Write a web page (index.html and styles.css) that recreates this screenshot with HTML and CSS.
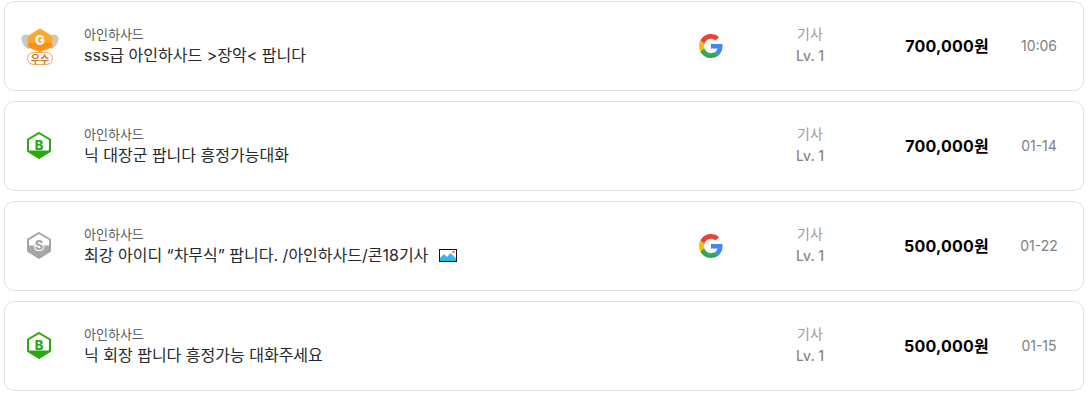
FILE: index.html
```html
<!DOCTYPE html>
<html lang="ko">
<head>
<meta charset="utf-8">
<title>거래 목록</title>
<link rel="stylesheet" href="styles.css">
</head>
<body>
<svg class="defs" width="0" height="0" aria-hidden="true">
  <defs>
    <symbol id="google" viewBox="0 0 48 48">
      <path fill="#EA4335" d="M24 9.500c3.540 0 6.710 1.220 9.210 3.600l6.850-6.850C35.900 2.380 30.470 0 24 0 14.620 0 6.510 5.380 2.560 13.220l7.980 6.190C12.430 13.720 17.740 9.500 24 9.500z"/>
      <path fill="#4285F4" d="M46.980 24.550c0-1.570-.15-3.090-.38-4.550H24v9.020h12.940c-.58 2.960-2.260 5.480-4.780 7.180l7.730 6c4.510-4.180 7.090-10.360 7.090-17.650z"/>
      <path fill="#FBBC05" d="M10.530 28.590c-.48-1.450-.76-2.990-.76-4.590s.27-3.140.76-4.590l-7.980-6.190C.92 16.460 0 20.120 0 24c0 3.880.92 7.540 2.560 10.780l7.970-6.190z"/>
      <path fill="#34A853" d="M24 48c6.480 0 11.930-2.130 15.890-5.810l-7.730-6c-2.150 1.450-4.920 2.300-8.160 2.300-6.260 0-11.570-4.220-13.470-9.910l-7.980 6.190C6.510 42.620 14.620 48 24 48z"/>
    </symbol>
  </defs>
</svg>
<main class="list">
  <article class="card">
    <div class="badge">
      <svg width="40" height="37" viewBox="-2 0 40 37">
        <path fill="#c8c8c8" d="M7 7C3 6 0 8 .5 11 1 15 3 19 8 21zM31 7c4-1 7 1 6.500 4-.5 4-2.500 8-7.500 10z"/>
        <path fill="#fba62f" stroke="#fbb75a" d="M19 .7 31.500 8.500V19L19 24 6.500 19V8.500z"/>
        <path fill="#f59320" d="M7 15H31V19L19 23.500 7 19z"/>
        <text x="19" y="17" class="badge-g">G</text>
        <rect x="6.500" y="24.500" width="25" height="12" rx="6" fill="#fff" stroke="#e5a868"/>
        <text x="19" y="34.500" class="badge-word">우수</text>
      </svg>
    </div>
    <div class="info">
      <div class="server">아인하사드</div>
      <div class="title">sss급 아인하사드 &gt;장악&lt; 팝니다</div>
    </div>
    <div class="login"><svg width="24" height="24"><use href="#google"/></svg></div>
    <div class="level"><span class="job">기사</span><span class="lv">Lv. 1</span></div>
    <div class="price">700,000원</div>
    <div class="date">10:06</div>
  </article>

  <article class="card">
    <div class="badge">
      <svg width="26" height="30" viewBox="0 0 26 30">
        <path fill="#fff" stroke="#2ba80f" stroke-width="2" d="M13 2 24 8.500V20L13 26.500 2 20V8.500z"/>
        <path fill="#2ba80f" d="M2 19.500H24V21L13 28 2 21z"/>
        <text x="13" y="18.500" class="badge-letter green">B</text>
      </svg>
    </div>
    <div class="info">
      <div class="server">아인하사드</div>
      <div class="title">닉 대장군 팝니다 흥정가능대화</div>
    </div>
    <div class="login"></div>
    <div class="level"><span class="job">기사</span><span class="lv">Lv. 1</span></div>
    <div class="price">700,000원</div>
    <div class="date">01-14</div>
  </article>

  <article class="card">
    <div class="badge">
      <svg width="26" height="30" viewBox="0 0 26 30">
        <path fill="#fff" stroke="#a6a6a6" stroke-width="2" d="M13 2 24 8.500V20L13 26.500 2 20V8.500z"/>
        <path fill="#a6a6a6" d="M2 14.500H24V21L13 28 2 21z"/>
        <text x="13" y="19" class="badge-letter grey">S</text>
      </svg>
    </div>
    <div class="info">
      <div class="server">아인하사드</div>
      <div class="title">최강 아이디 “차무식” 팝니다. /아인하사드/콘18기사
        <svg class="pic" width="18" height="13" viewBox="0 0 18 13">
          <rect x=".5" y=".5" width="17" height="12" fill="#fff" stroke="#111"/>
          <path fill="#2fb9f0" d="M1 12V9L5 5 8 8 11.500 4 17 9.500V12z"/>
          <circle cx="14.500" cy="3" r="1.300" fill="#f26d3d"/>
        </svg>
      </div>
    </div>
    <div class="login"><svg width="24" height="24"><use href="#google"/></svg></div>
    <div class="level"><span class="job">기사</span><span class="lv">Lv. 1</span></div>
    <div class="price">500,000원</div>
    <div class="date">01-22</div>
  </article>

  <article class="card">
    <div class="badge">
      <svg width="26" height="30" viewBox="0 0 26 30">
        <path fill="#fff" stroke="#2ba80f" stroke-width="2" d="M13 2 24 8.500V20L13 26.500 2 20V8.500z"/>
        <path fill="#2ba80f" d="M2 19.500H24V21L13 28 2 21z"/>
        <text x="13" y="18.500" class="badge-letter green">B</text>
      </svg>
    </div>
    <div class="info">
      <div class="server">아인하사드</div>
      <div class="title">닉 회장 팝니다 흥정가능 대화주세요</div>
    </div>
    <div class="login"></div>
    <div class="level"><span class="job">기사</span><span class="lv">Lv. 1</span></div>
    <div class="price">500,000원</div>
    <div class="date">01-15</div>
  </article>
</main>
</body>
</html>
```
FILE: styles.css
```css
* { box-sizing: border-box; }
html, body { margin: 0; background: #fff; }
body {
  font-family: Inter, "Noto Sans CJK KR", sans-serif;
  color: #25282c;
  overflow: hidden;
}
.defs { display: block; height: 0; }
.list {
  display: flex;
  flex-direction: column;
  gap: 10px;
  padding: 1px 5px 0 4px;
}
.card {
  display: grid;
  grid-template-columns: 69px 1fr 48px 150px 104px 94px;
  align-items: center;
  height: 90px;
  padding-left: 10px;
  border: 1px solid #dde0ea;
  border-radius: 10px;
  background: #fff;
}
.badge { display: flex; justify-content: center; width: 48px; }
.badge svg { display: block; }
.badge-g { font-size: 13px; font-weight: 800; fill: #fff; text-anchor: middle; }
.badge-word { font-size: 10px; font-weight: 700; fill: #c9772a; text-anchor: middle; }
.badge-letter { font-size: 13px; font-weight: 800; text-anchor: middle; }
.badge-letter.green { fill: #2ba80f; }
.badge-letter.grey { fill: #a6a6a6; stroke: #fff; stroke-width: 2px; paint-order: stroke; }
.info { display: flex; flex-direction: column; }
.server { font-size: 13px; line-height: 18px; color: #55585c; }
.title { font-size: 16px; line-height: 24px; }
.pic { vertical-align: -1px; margin-left: 6px; }
.login { display: flex; justify-content: center; }
.login svg { display: block; }
.level { display: flex; flex-direction: column; align-items: center; gap: 4px; font-size: 14px; line-height: 18px; padding-bottom: 2px; }
.job { color: #a39a94; }
.lv { color: #8d8681; font-weight: 500; }
.price { font-size: 16px; letter-spacing: .2px; font-weight: 700; text-align: right; color: #000; padding-bottom: 2px; }
.date { font-size: 14px; color: #808080; text-align: center; padding: 0 0 2px 6px; }
```
